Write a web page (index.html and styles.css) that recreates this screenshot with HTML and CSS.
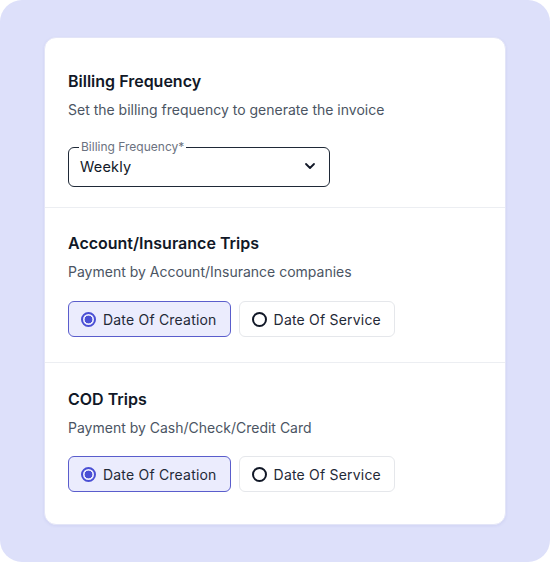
FILE: index.html
```html
<!DOCTYPE html>
<html lang="en">
<head>
<meta charset="utf-8">
<title>Billing settings</title>
<link rel="stylesheet" href="styles.css">
</head>
<body>
<div class="frame">
  <div class="card">
    <section class="section section-first">
      <h2 class="title">Billing Frequency</h2>
      <p class="subtitle">Set the billing frequency to generate the invoice</p>
      <fieldset class="select">
        <legend class="select-label">Billing Frequency*</legend>
        <div class="select-row">
          <span class="select-value">Weekly</span>
          <svg class="chevron" width="12" height="8" viewBox="0 0 12 8"><path d="M2 2l4 4 4-4" fill="none" stroke="#111827" stroke-width="1.8" stroke-linecap="round" stroke-linejoin="round"/></svg>
        </div>
      </fieldset>
    </section>
    <section class="section section-mid">
      <h2 class="title">Account/Insurance Trips</h2>
      <p class="subtitle">Payment by Account/Insurance companies</p>
      <div class="options">
        <div class="option option-selected"><span class="radio radio-on"></span><span class="option-text">Date Of Creation</span></div>
        <div class="option"><span class="radio"></span><span class="option-text">Date Of Service</span></div>
      </div>
    </section>
    <section class="section section-last">
      <h2 class="title">COD Trips</h2>
      <p class="subtitle">Payment by Cash/Check/Credit Card</p>
      <div class="options">
        <div class="option option-selected"><span class="radio radio-on"></span><span class="option-text">Date Of Creation</span></div>
        <div class="option"><span class="radio"></span><span class="option-text">Date Of Service</span></div>
      </div>
    </section>
  </div>
</div>
</body>
</html>
```
FILE: styles.css
```css
* { box-sizing: border-box; }
html, body { margin: 0; padding: 0; background: #ffffff; }
body {
  font-family: Inter, "Noto Sans", sans-serif;
  color: #111827;
}
.frame {
  width: 550px;
  height: 562px;
  background: #dde0fa;
  border-radius: 22px;
  padding: 37px 44px 0 44px;
}
.card {
  width: 462px;
  height: 488px;
  background: #ffffff;
  border-radius: 12px;
  border: 1px solid #e3e5f7;
  box-shadow: 0 1px 3px rgba(60, 70, 160, 0.08);
}
.section {
  padding: 0 23px;
  border-bottom: 1px solid #eceef2;
}
.section-first { padding-top: 31px; padding-bottom: 20px; }
.section-mid { padding-top: 23px; padding-bottom: 25px; }
.section-last { padding-top: 24px; padding-bottom: 0; border-bottom: none; }
.title {
  margin: 0;
  font-size: 16px;
  line-height: 24px;
  font-weight: 600;
  color: #111827;
}
.subtitle {
  margin: 7px 0 0 0;
  font-size: 14px;
  line-height: 20px;
  color: #4b5563;
}
.select {
  margin: 20px 0 0 0;
  width: 262px;
  padding: 0 11px 8px 11px;
  border: 1px solid #1f2937;
  border-radius: 6px;
}
.select-label {
  padding: 0 2px;
  margin-left: -1px;
  font-size: 12px;
  line-height: 14px;
  color: #6b7280;
}
.select-row {
  display: flex;
  align-items: center;
  justify-content: space-between;
  height: 24px;
}
.select-value { font-size: 14.5px; color: #111827; letter-spacing: 0.2px; }
.chevron { margin-right: 2px; }
.options {
  display: flex;
  gap: 8px;
  margin-top: 19px;
}
.section-last .options { margin-top: 18px; }
.option {
  display: flex;
  align-items: center;
  gap: 7px;
  height: 36px;
  padding: 0 13px 0 12px;
  border: 1px solid #e5e7eb;
  border-radius: 6px;
  background: #ffffff;
}
.option-selected {
  background: #ebecfd;
  border-color: #5a5dcc;
}
.option-text { font-size: 14px; color: #1f2937; letter-spacing: 0.2px; }
.radio {
  width: 15px;
  height: 15px;
  border-radius: 50%;
  border: 2px solid #111827;
  flex: none;
}
.radio-on {
  border-color: #4a4fd4;
  background: radial-gradient(circle, #4a4fd4 0 3.6px, transparent 4.2px);
}
```
